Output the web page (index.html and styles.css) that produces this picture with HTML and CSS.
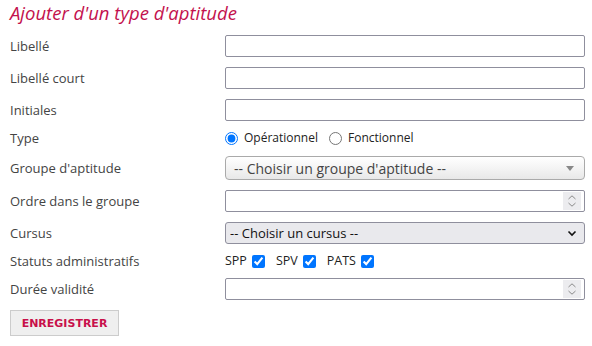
FILE: index.html
```html
<!DOCTYPE html>
<html lang="fr">
<head>
  <meta charset="UTF-8">
  <meta name="viewport" content="width=device-width, initial-scale=1.0">
  <title>Ajouter d'un type d'aptitude</title>
  <link rel="stylesheet" href="styles.css">
</head>
<body>
  <h1 class="page-title">Ajouter d'un type d'aptitude</h1>

  <form class="aptitude-form" onsubmit="return false;">
    <div class="form-row">
      <label class="form-label" for="libelle">Libellé</label>
      <input class="form-input" type="text" id="libelle">
    </div>

    <div class="form-row">
      <label class="form-label" for="libelle-court">Libellé court</label>
      <input class="form-input" type="text" id="libelle-court">
    </div>

    <div class="form-row">
      <label class="form-label" for="initiales">Initiales</label>
      <input class="form-input" type="text" id="initiales">
    </div>

    <div class="form-row form-row--type">
      <span class="form-label">Type</span>
      <div class="choice-list">
        <label class="choice">
          <input type="radio" name="type" value="op" checked>
          Opérationnel
        </label>
        <label class="choice">
          <input type="radio" name="type" value="fn">
          Fonctionnel
        </label>
      </div>
    </div>

    <div class="form-row">
      <label class="form-label">Groupe d'aptitude</label>
      <div class="select2-box">
        <span class="select2-text">-- Choisir un groupe d'aptitude --</span>
        <span class="select2-arrow"></span>
      </div>
    </div>

    <div class="form-row">
      <label class="form-label" for="ordre">Ordre dans le groupe</label>
      <div class="number-field">
        <input class="number-input" type="number" id="ordre">
        <span class="spin">
          <svg width="10" height="14" viewBox="0 0 10 14"><path d="M1.5 5 L5 1.8 L8.5 5 M1.5 9 L5 12.2 L8.5 9" fill="none" stroke="#8a8a8a" stroke-width="1"/></svg>
        </span>
      </div>
    </div>

    <div class="form-row">
      <label class="form-label" for="cursus">Cursus</label>
      <div class="select-wrap">
        <select class="form-select" id="cursus">
          <option>-- Choisir un cursus --</option>
        </select>
        <svg class="select-chevron" width="10" height="7" viewBox="0 0 10 7"><path d="M1.5 1.5 L5 5 L8.5 1.5" fill="none" stroke="#111" stroke-width="1.6"/></svg>
      </div>
    </div>

    <div class="form-row form-row--statuts">
      <span class="form-label">Statuts administratifs</span>
      <div class="choice-list">
        <label class="check">SPP <input type="checkbox" checked></label>
        <label class="check">SPV <input type="checkbox" checked></label>
        <label class="check">PATS <input type="checkbox" checked></label>
      </div>
    </div>

    <div class="form-row">
      <label class="form-label" for="duree">Durée validité</label>
      <div class="number-field">
        <input class="number-input" type="number" id="duree">
        <span class="spin">
          <svg width="10" height="14" viewBox="0 0 10 14"><path d="M1.5 5 L5 1.8 L8.5 5 M1.5 9 L5 12.2 L8.5 9" fill="none" stroke="#8a8a8a" stroke-width="1"/></svg>
        </span>
      </div>
    </div>

    <div class="form-actions">
      <button class="btn-save" type="submit">ENREGISTRER</button>
    </div>
  </form>
</body>
</html>
```

FILE: styles.css
```css
* {
  box-sizing: border-box;
}

body {
  margin: 0;
  padding: 0 10px;
  background: #fff;
  font-family: "Open Sans", "Noto Sans", sans-serif;
  color: #444;
}

.page-title {
  margin: 3px 0 12px;
  font-size: 18.5px;
  line-height: 20px;
  font-style: italic;
  font-weight: normal;
  color: #c3114d;
}

.aptitude-form {
  display: flex;
  flex-direction: column;
  gap: 10px;
}

.form-row {
  display: grid;
  grid-template-columns: 215px 360px;
  align-items: center;
}

.form-row--type {
  min-height: 16px;
  margin-top: -1px;
}

.form-label {
  font-size: 13px;
  line-height: 14px;
  color: #444;
}

.form-input {
  width: 360px;
  height: 22px;
  margin: 0;
  padding: 1px 4px;
  border: 1px solid #8f8f9d;
  border-radius: 2px;
  font-family: inherit;
  font-size: 13px;
  background: #fff;
}

/* champ numerique avec spinner */
.number-field {
  display: flex;
  align-items: center;
  width: 360px;
  height: 22px;
  padding: 0 3px 0 0;
  border: 1px solid #8f8f9d;
  border-radius: 2px;
  background: #fff;
}

.number-input {
  flex: 1;
  min-width: 0;
  height: 100%;
  padding: 0 4px;
  border: none;
  outline: none;
  font-family: inherit;
  font-size: 13px;
  background: transparent;
  -moz-appearance: textfield;
}

.number-input::-webkit-inner-spin-button,
.number-input::-webkit-outer-spin-button {
  -webkit-appearance: none;
  margin: 0;
}

.spin {
  display: flex;
  align-items: center;
  justify-content: center;
  width: 18px;
  height: 18px;
  background: #ececef;
}

/* radios + cases a cocher */
.choice-list {
  display: flex;
  align-items: center;
  gap: 11px;
  font-size: 12px;
  line-height: 14px;
  color: #222;
}

.choice {
  display: flex;
  align-items: center;
  gap: 6px;
}

.choice input {
  margin: 0;
  width: 13px;
  height: 13px;
}

.check {
  display: flex;
  align-items: center;
  gap: 5px;
  font-size: 12.5px;
}

.check input {
  margin: 0;
  width: 13px;
  height: 13px;
}

/* select2 */
.select2-box {
  display: flex;
  align-items: center;
  justify-content: space-between;
  height: 24px;
  padding: 0 10px 0 8px;
  border: 1px solid #aaa;
  border-radius: 4px;
  background: linear-gradient(to bottom, #fff 0%, #f4f4f4 50%, #e8e8e8 100%);
  font-size: 14px;
  color: #444;
}

.select2-arrow {
  width: 0;
  height: 0;
  border-left: 4px solid transparent;
  border-right: 4px solid transparent;
  border-top: 5px solid #888;
}

.select-wrap {
  position: relative;
  width: 360px;
}

.form-select {
  display: block;
  width: 360px;
  height: 22px;
  margin: 0;
  padding: 0 4px;
  border: 1px solid #8f8f9d;
  border-radius: 3px;
  background-color: #e9e9ed;
  font-family: inherit;
  font-size: 13px;
  color: #111;
  -webkit-appearance: none;
  appearance: none;
}

.select-chevron {
  position: absolute;
  right: 8px;
  top: 8px;
  pointer-events: none;
}

.form-actions {
  display: flex;
}

.btn-save {
  width: 109px;
  height: 26px;
  margin: 0;
  padding: 0;
  border: 1px solid #ccc;
  background: #efefef;
  font-family: "DejaVu Sans", Verdana, sans-serif;
  font-size: 11px;
  font-weight: bold;
  color: #c8104a;
  cursor: pointer;
}

.btn-save:hover {
  background: #e4e4e4;
}
```
